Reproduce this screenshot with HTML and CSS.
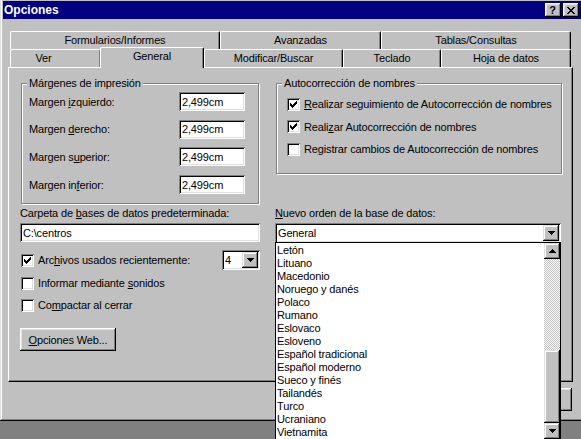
FILE: index.html
```html
<!DOCTYPE html>
<html lang="es">
<head>
<meta charset="utf-8">
<title>Opciones</title>
<link rel="stylesheet" href="styles.css">
</head>
<body>
<div class="window">
  <div class="titlebar">
    <span class="title">Opciones</span>
    <div class="tbtns">
      <span class="tbtn"><span class="q">?</span></span>
      <span class="tbtn"><svg width="8" height="7" viewBox="0 0 8 7" shape-rendering="crispEdges"><path fill="#000" d="M0 0h2v1H0z M6 0h2v1H6z M1 1h2v1H1z M5 1h2v1H5z M2 2h4v1H2z M3 3h2v1H3z M2 4h4v1H2z M1 5h2v1H1z M5 5h2v1H5z M0 6h2v1H0z M6 6h2v1H6z"/></svg></span>
    </div>
  </div>

  <div class="tabs">
    <div class="tabrow">
      <div class="tab t-form">Formularios/Informes</div>
      <div class="tab t-avz">Avanzadas</div>
      <div class="tab t-tc">Tablas/Consultas</div>
    </div>
    <div class="tabrow">
      <div class="tab t-ver">Ver</div>
      <div class="tab t-gen sel">General</div>
      <div class="tab t-mod">Modificar/Buscar</div>
      <div class="tab t-tec">Teclado</div>
      <div class="tab t-hoja">Hoja de datos</div>
    </div>
  </div>

  <div class="panel">
    <div class="grid">
      <div class="group g-left">
        <div class="legend">Márgenes de impresión</div>
        <div class="margins">
          <span>Margen <u>i</u>zquierdo:</span><div class="edit">2,499cm</div>
          <span>Margen <u>d</u>erecho:</span><div class="edit">2,499cm</div>
          <span>Margen s<u>u</u>perior:</span><div class="edit">2,499cm</div>
          <span>Margen in<u>f</u>erior:</span><div class="edit">2,499cm</div>
        </div>
      </div>

      <div class="group g-right">
        <div class="legend">Autocorrección de nombres</div>
        <div class="checks">
          <div class="check"><span class="cb"><svg width="7" height="7" viewBox="0 0 7 7" shape-rendering="crispEdges"><path fill="#000" d="M6 0h1v1H6z M5 1h2v1H5z M0 2h1v1H0z M4 2h3v1H4z M0 3h2v1H0z M3 3h3v1H3z M0 4h5v1H0z M1 5h3v1H1z M2 6h1v1H2z"/></svg></span><span><u>R</u>ealizar seguimiento de Autocorrección de nombres</span></div>
          <div class="check"><span class="cb"><svg width="7" height="7" viewBox="0 0 7 7" shape-rendering="crispEdges"><path fill="#000" d="M6 0h1v1H6z M5 1h2v1H5z M0 2h1v1H0z M4 2h3v1H4z M0 3h2v1H0z M3 3h3v1H3z M0 4h5v1H0z M1 5h3v1H1z M2 6h1v1H2z"/></svg></span><span>Reali<u>z</u>ar Autocorrección de nombres</span></div>
          <div class="check"><span class="cb"></span><span>Re<u>g</u>istrar cambios de Autocorrección de nombres</span></div>
        </div>
      </div>

      <div class="lbl">Carpeta de <u>b</u>ases de datos predeterminada:</div>
      <div class="lbl"><u>N</u>uevo orden de la base de datos:</div>

      <div class="edit wide">C:\centros</div>
      <div class="combo big">
        <span class="val">General</span>
        <span class="dd"><svg width="7" height="4" viewBox="0 0 7 4" shape-rendering="crispEdges"><path fill="#000" d="M0 0h7v1H0z M1 1h5v1H1z M2 2h3v1H2z M3 3h1v1H3z"/></svg></span>
        <div class="droplist">
          <div class="items">
            <div>Letón</div>
            <div>Lituano</div>
            <div>Macedonio</div>
            <div>Noruego y danés</div>
            <div>Polaco</div>
            <div>Rumano</div>
            <div>Eslovaco</div>
            <div>Esloveno</div>
            <div>Español tradicional</div>
            <div>Español moderno</div>
            <div>Sueco y finés</div>
            <div>Tailandés</div>
            <div>Turco</div>
            <div>Ucraniano</div>
            <div>Vietnamita</div>
          </div>
          <div class="sb">
            <span class="sbtn"><svg width="7" height="4" viewBox="0 0 7 4" shape-rendering="crispEdges"><path fill="#000" d="M3 0h1v1H3z M2 1h3v1H2z M1 2h5v1H1z M0 3h7v1H0z"/></svg></span>
            <span class="track"></span>
            <span class="thumb"></span>
            <span class="sbtn"><svg width="7" height="4" viewBox="0 0 7 4" shape-rendering="crispEdges"><path fill="#000" d="M0 0h7v1H0z M1 1h5v1H1z M2 2h3v1H2z M3 3h1v1H3z"/></svg></span>
          </div>
        </div>
      </div>

      <div class="rest">
        <div class="check row-arch">
          <span class="cb"><svg width="7" height="7" viewBox="0 0 7 7" shape-rendering="crispEdges"><path fill="#000" d="M6 0h1v1H6z M5 1h2v1H5z M0 2h1v1H0z M4 2h3v1H4z M0 3h2v1H0z M3 3h3v1H3z M0 4h5v1H0z M1 5h3v1H1z M2 6h1v1H2z"/></svg></span>
          <span>Arc<u>h</u>ivos usados recientemente:</span>
          <div class="combo small">
            <span class="val">4</span>
            <span class="dd"><svg width="7" height="4" viewBox="0 0 7 4" shape-rendering="crispEdges"><path fill="#000" d="M0 0h7v1H0z M1 1h5v1H1z M2 2h3v1H2z M3 3h1v1H3z"/></svg></span>
          </div>
        </div>
        <div class="check row-inf"><span class="cb"></span><span>Informar mediante <u>s</u>onidos</span></div>
        <div class="check row-comp"><span class="cb"></span><span>Co<u>m</u>pactar al cerrar</span></div>
        <div class="btn web"><u>O</u>pciones Web...</div>
      </div>
    </div>
  </div>

  <div class="btnrow">
    <div class="btn">Aceptar</div>
    <div class="btn">Cancelar</div>
    <div class="btn">Aplicar</div>
  </div>
</div>
</body>
</html>
```

FILE: styles.css
```css
* { box-sizing: border-box; }

html, body { margin: 0; padding: 0; }

body {
  width: 581px;
  height: 439px;
  overflow: hidden;
  background: #808080;
  font-family: "Liberation Sans", Arial, sans-serif;
  font-size: 11px;
  letter-spacing: -0.15px;
  color: #000;
}

u { text-decoration-thickness: 1px; text-underline-offset: 1px; }

.window {
  width: 584px;
  height: 423px;
  margin-top: -2px;
  padding: 3px;
  background: #c0c0c0;
  box-shadow: inset -1px -1px #000, inset 1px 1px #dfdfdf, inset -2px -2px #808080, inset 2px 2px #fff;
  display: flex;
  flex-direction: column;
}

/* title bar */
.titlebar {
  height: 18px;
  background: #000080;
  color: #fff;
  display: flex;
  align-items: center;
  padding-left: 1px;
}
.title { flex: 1; font-weight: bold; font-size: 12px; letter-spacing: 0; }
.tbtns { display: flex; gap: 2px; margin-right: 2px; }
.tbtn {
  width: 16px;
  height: 14px;
  background: #c0c0c0;
  box-shadow: inset -1px -1px #000, inset 1px 1px #fff, inset -2px -2px #808080, inset 2px 2px #dfdfdf;
  display: flex;
  align-items: center;
  justify-content: center;
}
.tbtn svg { margin-left: -1px; }
.q { color: #000; font-weight: bold; font-size: 11px; line-height: 11px; letter-spacing: 0; margin-left: -1px; }

/* tabs */
.tabs { margin: 12px 0 0 7px; width: 561px; position: relative; z-index: 1; }
.tabrow { display: flex; height: 18px; align-items: flex-start; }
.tab {
  height: 18px;
  background: #c0c0c0;
  border-top: 1px solid #fff;
  border-left: 1px solid #fff;
  border-right: 1px solid #000;
  border-radius: 2px 2px 0 0;
  box-shadow: inset -1px 0 #808080;
  text-align: center;
  line-height: 16px;
  white-space: nowrap;
}
.t-form { width: 210px; }
.t-avz { width: 161px; }
.t-tc { width: 190px; }
.t-ver { width: 91px; padding-right: 24px; }
.t-gen { width: 104px; }
.t-mod { width: 139px; }
.t-tec { width: 98px; }
.t-hoja { width: 130px; }
.tab.sel {
  height: 21px;
  margin-top: -2px;
  margin-left: -1px;
  position: relative;
  z-index: 2;
}

/* panel */
.panel {
  margin-left: 5px;
  width: 565px;
  height: 315px;
  border: 1px solid;
  border-color: #fff #000 #000 #fff;
  box-shadow: inset -1px -1px #808080;
  padding: 9px 0 0 11px;
}

.grid {
  display: grid;
  grid-template-columns: 240px 287px;
  column-gap: 15px;
  align-items: start;
}

/* group boxes */
.group {
  margin-top: 6px;
  margin-left: 1px;
  border: 1px solid #808080;
  box-shadow: inset 1px 1px #fff, 1px 1px #fff;
}
.legend {
  width: fit-content;
  margin-top: -7px;
  padding: 0 2px;
  margin-left: -2px;
  line-height: 13px;
  height: 13px;
  background: #c0c0c0;
}
.g-left { width: 238px; padding: 0 13px 9px 7px; }
.g-right { width: 286px; padding: 0 10px 16px 10px; }
.g-right .legend { margin-left: -5px; }

.margins {
  margin-top: 2px;
  display: grid;
  grid-template-columns: 1fr 66px;
  row-gap: 8.7px;
  align-items: center;
}

.checks { margin-top: 6px; display: flex; flex-direction: column; gap: 6.5px; }

.check { display: flex; align-items: center; height: 16px; gap: 4px; white-space: nowrap; }

.cb {
  width: 13px;
  height: 13px;
  flex: none;
  background: #fff;
  box-shadow: inset 1px 1px #808080, inset -1px -1px #fff, inset 2px 2px #000, inset -2px -2px #dfdfdf;
  display: flex;
  align-items: center;
  justify-content: center;
}

/* edits */
.edit {
  height: 19px;
  background: #fff;
  box-shadow: inset 1px 1px #808080, inset -1px -1px #fff, inset 2px 2px #000, inset -2px -2px #dfdfdf;
  padding-left: 3px;
  display: flex;
  align-items: center;
  white-space: nowrap;
}

.lbl { margin-top: 3px; line-height: 13px; height: 13px; white-space: nowrap; }
.wide { margin-top: 3px; width: 240px; }

/* combos */
.combo {
  position: relative;
  height: 20px;
  background: #fff;
  box-shadow: inset 1px 1px #808080, inset -1px -1px #fff, inset 2px 2px #000, inset -2px -2px #dfdfdf;
  padding: 2px;
  display: flex;
  align-items: center;
}
.combo .val { flex: 1; padding-left: 1px; }
.big { margin-top: 3px; width: 286px; }
.small { width: 38px; margin-left: auto; height: 20px; }
.dd {
  width: 16px;
  height: 16px;
  flex: none;
  background: #c0c0c0;
  box-shadow: inset -1px -1px #000, inset 1px 1px #dfdfdf, inset -2px -2px #808080, inset 2px 2px #fff;
  display: flex;
  align-items: center;
  justify-content: center;
}

/* dropdown list (overlay) */
.droplist {
  position: absolute;
  left: 0;
  top: 19px;
  width: 286px;
  height: 198px;
  border: 1px solid #000;
  background: #fff;
  display: flex;
  z-index: 5;
}
.items { flex: 1; padding: 1px 0 0 1px; }
.items div { height: 13px; line-height: 13px; white-space: nowrap; }
.sb { width: 16px; display: flex; flex-direction: column; }
.sbtn, .thumb {
  background: #c0c0c0;
  box-shadow: inset -1px -1px #000, inset 1px 1px #dfdfdf, inset -2px -2px #808080, inset 2px 2px #fff;
}
.sbtn { height: 16px; display: flex; align-items: center; justify-content: center; flex: none; }
.track {
  height: 91px;
  flex: none;
  background: repeating-conic-gradient(#c0c0c0 0 25%, #fff 0 50%) 0 0 / 2px 2px;
}
.thumb { height: 73px; flex: none; }

/* rest of left column */
.rest { display: flex; flex-direction: column; margin-top: 7px; }
.rest .check { margin-left: 1px; }
.row-arch { height: 20px; }
.row-inf { margin-top: 5px; }
.row-comp { margin-top: 6px; }

.btn {
  height: 23px;
  background: #c0c0c0;
  box-shadow: inset -1px -1px #000, inset 1px 1px #fff, inset -2px -2px #808080, inset 2px 2px #dfdfdf;
  display: flex;
  align-items: center;
  justify-content: center;
  white-space: nowrap;
}
.web { width: 96px; margin-top: 15px; }

.btnrow {
  display: flex;
  justify-content: flex-end;
  gap: 6px;
  margin: 6px 9px 0 0;
}
.btnrow .btn { width: 75px; }
```
